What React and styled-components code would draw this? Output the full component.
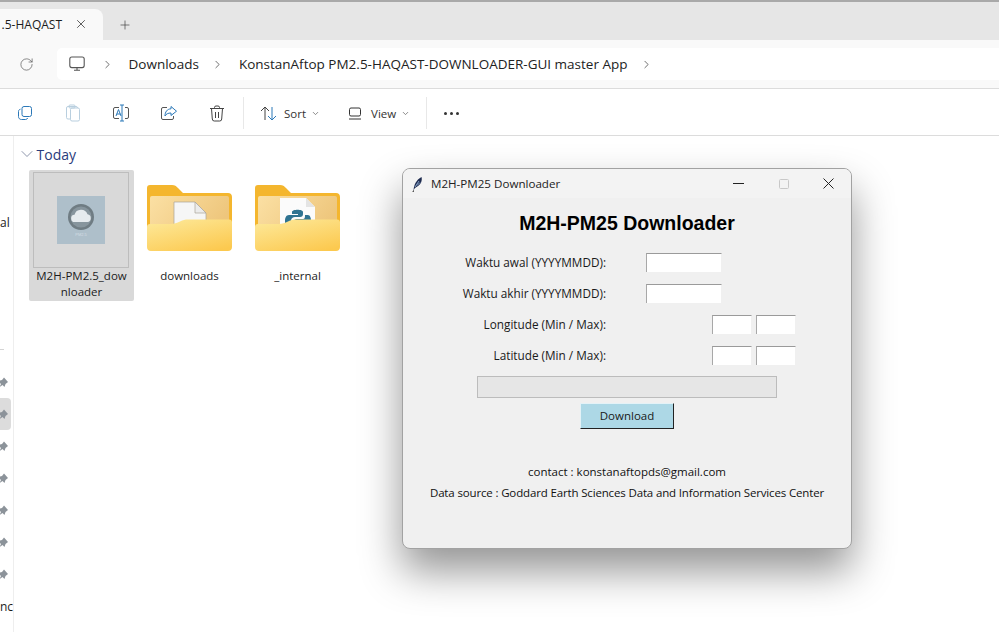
import React from "react";
import styled, { createGlobalStyle } from "styled-components";
import { ChevronDown, ChevronRight, Plus, RotateCw, X } from "lucide-react";

const ui = `"Open Sans", "Noto Sans", sans-serif`;

const GlobalStyle = createGlobalStyle`
  html, body { margin: 0; padding: 0; background: #fff; }
  * { box-sizing: border-box; }
`;

const Page = styled.div`
  position: relative;
  width: 999px;
  height: 632px;
  overflow: hidden;
  background: #fff;
  font-family: ${ui};
  color: #1c1c1c;
`;

/* tabs */
const TabBar = styled.div`
  height: 40px;
  display: flex;
  align-items: flex-end;
  background: #e6e6e6;
  border-top: 2px solid #a9a9a9;
`;

const Tab = styled.div`
  width: 103px;
  height: 31px;
  display: flex;
  align-items: center;
  justify-content: flex-end;
  padding: 0 15px 1px 0;
  gap: 12px;
  background: #f9f9f9;
  border-radius: 0 8px 0 0;
  font-size: 12px;
  white-space: nowrap;
  svg {
    flex: none;
  }
`;

const NewTab = styled.div`
  width: 44px;
  height: 31px;
  display: flex;
  align-items: center;
  justify-content: center;
  color: #444;
`;

/* address */
const AddressRow = styled.div`
  height: 49px;
  display: flex;
  align-items: center;
  background: #f9f9f9;
  border-bottom: 1px solid #dcdcdc;
  padding-left: 56px;
`;

const Refresh = styled.div`
  width: 38px;
  margin-left: -37px;
  display: flex;
  justify-content: flex-start;
  color: #555;
`;

const Breadcrumb = styled.div`
  flex: 1;
  height: 32px;
  background: #fff;
  border-radius: 5px 0 0 5px;
  display: flex;
  align-items: center;
  padding-left: 12px;
  font-size: 13.5px;
  color: #222;
`;

const CrumbIcon = styled.svg`
  width: 16px;
  height: 16px;
  margin-right: 16px;
  flex: none;
`;

const Crumb = styled.span`
  white-space: nowrap;
  margin: 0 12.5px 0 14.5px;
`;

const Sep = styled(ChevronRight)`
  color: #444;
  width: 13px;
  height: 13px;
  flex: none;
`;

/* toolbar */
const Toolbar = styled.div`
  height: 47px;
  display: flex;
  align-items: center;
  padding: 2px 0 0 1px;
  border-bottom: 1px solid #dcdcdc;
  background: #fff;
`;

const ToolIcon = styled.div`
  width: 48px;
  height: 34px;
  display: flex;
  align-items: center;
  justify-content: center;
`;

const Divider = styled.div`
  width: 1px;
  height: 32px;
  background: #e8e8e8;
  margin: ${(p) => p.$margin};
`;

const ToolLabel = styled.div`
  display: flex;
  align-items: center;
  font-size: 11.5px;
  color: #333;
  gap: 5px;
  margin-right: ${(p) => p.$right}px;
  svg:first-child {
    margin-right: ${(p) => p.$iconGap}px;
  }
`;

const SmallChevron = styled(ChevronDown)`
  width: 9px;
  height: 9px;
  color: #666;
`;

const Dots = styled.div`
  margin-left: 17px;
  display: flex;
  gap: 3px;
  span {
    width: 3px;
    height: 3px;
    border-radius: 50%;
    background: #333;
  }
`;

/* explorer body */
const Body = styled.div`
  display: flex;
  height: 496px;
`;

const Sidebar = styled.div`
  width: 14px;
  flex: none;
  border-right: 1px solid #eeeeee;
  padding-top: 70px;
  overflow: hidden;
`;

const SideRow = styled.div`
  height: 32px;
  width: 11px;
  display: flex;
  align-items: center;
  border-radius: 0 4px 4px 0;
  background: ${(p) => (p.$active ? "#dcdcdc" : "transparent")};
  font-size: 12px;
  white-space: nowrap;
`;

const SideRule = styled.div`
  width: 4px;
  height: 1px;
  background: #d4d4d4;
  margin: 111px 0 16px;
`;

const Main = styled.div`
  flex: 1;
  padding: 8px 0 0 2.5px;
`;

const GroupHead = styled.div`
  display: flex;
  align-items: center;
  height: 20px;
  font-size: 14px;
  color: #2a3c7c;
`;

const GroupChevron = styled(ChevronDown)`
  width: 20px;
  height: 20px;
  color: #78829c;
  stroke-width: 1;
`;

const Files = styled.div`
  display: flex;
  gap: 3px;
  margin: 6px 0 0 12.5px;
`;

const FileItem = styled.div`
  width: 105px;
  height: 131px;
  padding: 2px 1px 0 0;
  border-radius: 2px;
  background: ${(p) => (p.$selected ? "#d9d9d9" : "transparent")};
  display: flex;
  flex-direction: column;
  align-items: center;
`;

const Thumb = styled.div`
  width: 96px;
  height: 96px;
  flex: none;
  display: flex;
  align-items: center;
  justify-content: center;
  border: 1px solid ${(p) => (p.$framed ? "#bdbdbd" : "transparent")};
  svg {
    margin-bottom: ${(p) => (p.$framed ? 0 : 4)}px;
  }
`;

const FileName = styled.div`
  width: 96px;
  margin-left: 1px;
  font-size: 11.5px;
  line-height: 16px;
  text-align: center;
  color: #1c1c1c;
  white-space: nowrap;
`;

/* tk window */
const TkWindow = styled.div`
  position: absolute;
  left: 402px;
  top: 168px;
  width: 450px;
  height: 381px;
  background: #f0f0f0;
  border: 1px solid #a2a2a2;
  border-radius: 8px;
  box-shadow: 0 22px 42px rgba(0, 0, 0, 0.42);
  overflow: hidden;
`;

const TitleBar = styled.div`
  height: 29px;
  display: flex;
  align-items: center;
  padding-left: 8px;
  background: #f3f3f3;
  font-size: 11.6px;
  color: #222;
`;

const TitleText = styled.span`
  flex: 1;
  margin-left: 8px;
`;

const WinButton = styled.div`
  width: 45px;
  height: 29px;
  display: flex;
  align-items: center;
  justify-content: center;
  color: #222;
`;

const Heading = styled.h1`
  margin: 11px 0 15px;
  font: bold 19.5px/29px "Liberation Sans", Arial, sans-serif;
  text-align: center;
  color: #000;
`;

const Field = styled.div`
  height: 31px;
  display: flex;
  align-items: flex-start;
`;

const FieldLabel = styled.label`
  width: 203px;
  text-align: right;
  font-size: 11.75px;
  line-height: 19px;
  color: #1a1a1a;
  white-space: nowrap;
`;

const Inputs = styled.div`
  display: flex;
  gap: 4px;
  margin-left: ${(p) => p.$indent}px;
`;

const Entry = styled.div`
  width: ${(p) => p.$width}px;
  height: 19px;
  background: #fff;
  border-top: 1px solid #9a9a9a;
  border-left: 1px solid #a8a8a8;
  border-right: 1px solid #f0f0f0;
`;

const Progress = styled.div`
  width: 300px;
  height: 22px;
  margin: -1px auto 0;
  background: #e6e6e6;
  border: 1px solid #bcbcbc;
`;

const DownloadButton = styled.button`
  display: block;
  width: 94px;
  height: 26px;
  margin: 5px auto 0;
  padding: 0 0 2px;
  background: #add8e6;
  border: none;
  border-right: 1px solid #222;
  border-bottom: 1px solid #222;
  border-top: 1px solid #e4f2f7;
  border-left: 1px solid #e4f2f7;
  font-family: ${ui};
  font-size: 11.5px;
  color: #1a1a1a;
`;

const Footer = styled.div`
  margin-top: 32px;
  text-align: center;
  font-size: 11.5px;
  line-height: 21px;
  color: #111;
  white-space: nowrap;
`;

const FooterLine = styled.div`
  letter-spacing: ${(p) => p.$spacing || 0}px;
`;

const Stroke = styled.svg`
  fill: none;
  stroke: ${(p) => p.$color || "#444"};
  stroke-width: 1;
`;

const MonitorIcon = () => (
  <CrumbIcon viewBox="0 0 16 16" fill="none" stroke="#555" strokeWidth="1.1">
    <rect x="0.8" y="1" width="14.4" height="10.6" rx="2" />
    <path d="M5 14.2h6M8 11.6v2.6" />
  </CrumbIcon>
);

const CopyIcon = () => (
  <Stroke $color="#2b78b8" width="16" height="16" viewBox="0 0 16 16">
    <rect x="5" y="1.5" width="9.5" height="10" rx="2" />
    <path d="M3.5 4.2C2 4.5 1.5 5.5 1.5 6.5v5c0 1.8 1.2 3 3 3h4c1 0 1.8-.5 2.2-1.5" />
  </Stroke>
);

const PasteIcon = () => (
  <Stroke $color="#b9cfdf" width="16" height="18" viewBox="0 0 16 18">
    <rect x="5.5" y="4" width="9" height="13" rx="1.5" />
    <path d="M5.5 15H3a1.5 1.5 0 0 1-1.5-1.5V4A1.5 1.5 0 0 1 3 2.5h8A1.5 1.5 0 0 1 12.5 4" />
    <rect x="4" y="1" width="6" height="3" rx="1" />
  </Stroke>
);

const RenameIcon = () => (
  <svg width="18" height="18" viewBox="0 0 18 18" fill="none">
    <path d="M7 3.5H3A1.5 1.5 0 0 0 1.5 5v8A1.5 1.5 0 0 0 3 14.5h4M13 3.5h2A1.5 1.5 0 0 1 16.5 5v8a1.5 1.5 0 0 1-1.5 1.5h-2" stroke="#555" />
    <path d="M10 1v16M8 1h4M8 17h4" stroke="#2b78b8" />
    <path d="M4 12l2.5-6.5L9 12M4.8 10h3.6" stroke="#2b78b8" />
  </svg>
);

const ShareIcon = () => (
  <svg width="18" height="16" viewBox="0 0 18 16" fill="none">
    <path d="M7 2.5H3A1.5 1.5 0 0 0 1.5 4v9A1.5 1.5 0 0 0 3 14.5h9a1.5 1.5 0 0 0 1.5-1.5v-2" stroke="#555" />
    <path d="M11 1.5l5.5 4.7L11 10.5V8c-3 0-5 1-6 3 0-4 2-7 6-7.2z" stroke="#2b78b8" />
  </svg>
);

const TrashIcon = () => (
  <Stroke $color="#444" width="16" height="17" viewBox="0 0 16 17">
    <path d="M1 3.5h14M5.5 3.5v-1A1.5 1.5 0 0 1 7 1h2a1.5 1.5 0 0 1 1.5 1.5v1" />
    <path d="M2.5 3.5l.8 10.5a2 2 0 0 0 2 2h5.4a2 2 0 0 0 2-2l.8-10.5M6.5 7v6M9.5 7v6" />
  </Stroke>
);

const SortIcon = () => (
  <svg width="17" height="15" viewBox="0 0 17 15" fill="none">
    <path d="M5 14V1M1 5l4-4 4 4" stroke="#444" />
    <path d="M12 1v13M8 10l4 4 4-4" stroke="#2b78b8" />
  </svg>
);

const ViewIcon = () => (
  <Stroke $color="#333" width="14" height="13" viewBox="0 0 14 13">
    <rect x="1.5" y="1" width="11" height="8" rx="1.5" />
    <path d="M1 12h12" />
  </Stroke>
);

const PinIcon = () => (
  <svg width="9" height="10" viewBox="0 0 9 10" style={{ flex: "none" }}>
    <path d="M-2 4l4-1 2-2.5 4 4.5-2.5 2-1 3-2-2-3 2 1.5-3z" fill="#8c939a" />
  </svg>
);

const FeatherIcon = () => (
  <svg width="12" height="16" viewBox="0 0 12 16" fill="none">
    <path d="M2.5 14.5C3 9 5 4 10.5 1c1 3-.5 8-5 10-1 .5-2 1-3 3.5z" fill="#1e2b4f" />
    <path d="M4 11l4-6M6 9.5l3-3" stroke="#9fc0e6" strokeWidth="0.8" />
    <path d="M2.5 14.5L2 16" stroke="#111" />
  </svg>
);

const AppIcon = () => (
  <svg width="48" height="48" viewBox="0 0 48 48">
    <rect width="48" height="48" fill="#aebfca" />
    <circle cx="24" cy="21" r="13" fill="#6f7c83" />
    <circle cx="24" cy="21" r="10.5" fill="#87959d" />
    <path d="M18 26a3.6 3.6 0 0 1-.5-7.200 6.800 6.800 0 0 1 13-.5 3.900 3.900 0 0 1 0 7.700z" fill="#e6ebee" />
    <text x="24" y="40" fontSize="4" fontFamily="Liberation Sans" fill="#d4dee4" textAnchor="middle">PM2.5</text>
  </svg>
);

const PlainDoc = () => (
  <>
    <path d="M27 17h21l11 11v24H27z" fill="#f6f6f6" stroke="#a9a49a" strokeWidth="0.7" />
    <path d="M48 17v11h11z" fill="#ececec" stroke="#a9a49a" strokeWidth="0.7" />
  </>
);

const PythonDoc = () => (
  <>
    <path d="M25 13h26l9 9v28H25z" fill="#fbfbfb" />
    <path d="M51 13v9h9z" fill="#e4e4e4" />
    <path d="M36 36c0-3 2-4 4-4h5c2 0 3-1 3-3v-2c0-3-11-3-11 0v2h6v1h-9c-3 0-4 3-4 6v6h6z" fill="#2f7391" />
    <path d="M38 38c0-3 2-4 4-4h6c2 0 2-2 2-4h3c2 0 3 3 3 6v8H37z" fill="#2f7391" />
  </>
);

const Folder = ({ id, children }) => (
  <svg width="85" height="66" viewBox="0 0 85 66">
    <defs>
      <linearGradient id={`${id}-in`} x1="0" x2="1" y1="0" y2="0.4">
        <stop offset="0" stopColor="#fbe0a4" />
        <stop offset="1" stopColor="#eec67c" />
      </linearGradient>
      <linearGradient id={`${id}-front`} x1="0.2" x2="0.8" y1="0" y2="1">
        <stop offset="0" stopColor="#fde796" />
        <stop offset="1" stopColor="#fcc94f" />
      </linearGradient>
    </defs>
    <path d="M3 0h22c3 0 4 1 6 3l5 5h45c2.5 0 4 1.5 4 4v44H0V3c0-2 1-3 3-3z" fill="#f4b62e" />
    <rect x="3" y="11" width="79" height="40" rx="2" fill={`url(#${id}-in)`} />
    {children}
    <path d="M0 42c0-2 1-3 3-3h21c3 0 6-1 9-2.5 3-1.5 5-2 8-2h41c2 0 3 1 3 3V62c0 2.5-1.5 4-4 4H4c-2.5 0-4-1.5-4-4z" fill={`url(#${id}-front)`} />
  </svg>
);

const pinRows = [0, 1, 2, 3, 4, 5, 6];

const App = () => {
  return (
    <Page>
      <GlobalStyle />
      <TabBar>
        <Tab>
          <span>.5-HAQAST</span>
          <X size={14} strokeWidth={1.2} />
        </Tab>
        <NewTab>
          <Plus size={14} strokeWidth={1.2} />
        </NewTab>
      </TabBar>

      <AddressRow>
        <Refresh>
          <RotateCw size={15} strokeWidth={1.1} />
        </Refresh>
        <Breadcrumb>
          <MonitorIcon />
          <Sep strokeWidth={1.4} />
          <Crumb>Downloads</Crumb>
          <Sep strokeWidth={1.4} />
          <Crumb>KonstanAftop PM2.5-HAQAST-DOWNLOADER-GUI master App</Crumb>
          <Sep strokeWidth={1.4} />
        </Breadcrumb>
      </AddressRow>

      <Toolbar>
        <ToolIcon><CopyIcon /></ToolIcon>
        <ToolIcon><PasteIcon /></ToolIcon>
        <ToolIcon><RenameIcon /></ToolIcon>
        <ToolIcon><ShareIcon /></ToolIcon>
        <ToolIcon><TrashIcon /></ToolIcon>
        <Divider $margin="0 16px 0 2px" />
        <ToolLabel $right={28} $iconGap={2}>
          <SortIcon />
          Sort
          <SmallChevron />
        </ToolLabel>
        <ToolLabel $right={16} $iconGap={4}>
          <ViewIcon />
          View
          <SmallChevron />
        </ToolLabel>
        <Divider $margin="0" />
        <Dots><span /><span /><span /></Dots>
      </Toolbar>

      <Body>
        <Sidebar>
          <SideRow>al</SideRow>
          <SideRule />
          {pinRows.map((n) => (
            <SideRow key={n} $active={n === 1}><PinIcon /></SideRow>
          ))}
          <SideRow>nc</SideRow>
        </Sidebar>
        <Main>
          <GroupHead>
            <GroupChevron />
            Today
          </GroupHead>
          <Files>
            <FileItem $selected>
              <Thumb $framed><AppIcon /></Thumb>
              <FileName>M2H-PM2.5_dow<br />nloader</FileName>
            </FileItem>
            <FileItem>
              <Thumb><Folder id="dl"><PlainDoc /></Folder></Thumb>
              <FileName>downloads</FileName>
            </FileItem>
            <FileItem>
              <Thumb><Folder id="int"><PythonDoc /></Folder></Thumb>
              <FileName>_internal</FileName>
            </FileItem>
          </Files>
        </Main>
      </Body>

      <TkWindow>
        <TitleBar>
          <FeatherIcon />
          <TitleText>M2H-PM25 Downloader</TitleText>
          <WinButton>
            <svg width="11" height="11" viewBox="0 0 11 11"><path d="M0 5.5h11" stroke="#222" /></svg>
          </WinButton>
          <WinButton>
            <svg width="10" height="10" viewBox="0 0 10 10"><rect x="0.5" y="0.5" width="9" height="9" rx="1" fill="none" stroke="#c8c8c8" /></svg>
          </WinButton>
          <WinButton>
            <svg width="11" height="11" viewBox="0 0 11 11"><path d="M.5.5l10 10M10.5.5l-10 10" stroke="#222" /></svg>
          </WinButton>
        </TitleBar>
        <Heading>M2H-PM25 Downloader</Heading>
        <Field>
          <FieldLabel>Waktu awal (YYYYMMDD):</FieldLabel>
          <Inputs $indent={40}><Entry $width={76} /></Inputs>
        </Field>
        <Field>
          <FieldLabel>Waktu akhir (YYYYMMDD):</FieldLabel>
          <Inputs $indent={40}><Entry $width={76} /></Inputs>
        </Field>
        <Field>
          <FieldLabel>Longitude (Min / Max):</FieldLabel>
          <Inputs $indent={106}><Entry $width={40} /><Entry $width={40} /></Inputs>
        </Field>
        <Field>
          <FieldLabel>Latitude (Min / Max):</FieldLabel>
          <Inputs $indent={106}><Entry $width={40} /><Entry $width={40} /></Inputs>
        </Field>
        <Progress />
        <DownloadButton>Download</DownloadButton>
        <Footer>
          <FooterLine>contact : konstanaftopds@gmail.com</FooterLine>
          <FooterLine $spacing={-0.15}>Data source : Goddard Earth Sciences Data and Information Services Center</FooterLine>
        </Footer>
      </TkWindow>
    </Page>
  );
};

export default App;
